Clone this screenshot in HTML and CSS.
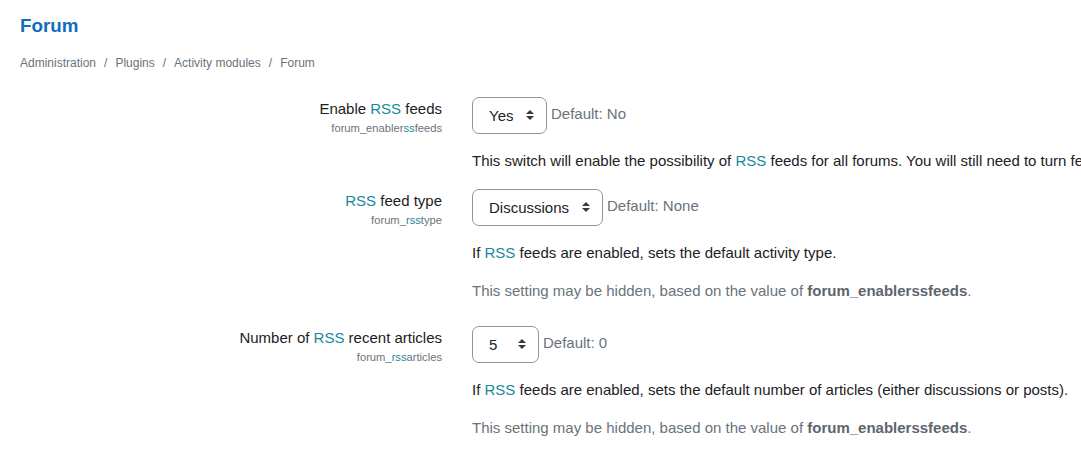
FILE: index.html
```html
<!DOCTYPE html>
<html lang="en">
<head>
<meta charset="utf-8">
<title>Forum</title>
<link rel="stylesheet" href="styles.css">
</head>
<body>
<div class="page">
  <h2 class="title">Forum</h2>
  <nav class="crumbs">
    <span>Administration</span><span class="sep">/</span><span>Plugins</span><span class="sep">/</span><span>Activity modules</span><span class="sep">/</span><span>Forum</span>
  </nav>

  <div class="setting first">
    <div class="label">
      <div class="name">Enable <span class="hl">RSS</span> feeds</div>
      <div class="key">forum_enabler<span class="hl">ss</span>feeds</div>
    </div>
    <div class="field">
      <div class="control">
        <span class="sel"><select><option>Yes</option><option>No</option></select></span>
        <span class="default">Default: No</span>
      </div>
      <p class="desc">This switch will enable the possibility of <span class="hl">RSS</span> feeds for all forums. You will still need to turn feeds on manually in the settings for each forum.</p>
    </div>
  </div>

  <div class="setting">
    <div class="label">
      <div class="name"><span class="hl">RSS</span> feed type</div>
      <div class="key">forum_<span class="hl">rss</span>type</div>
    </div>
    <div class="field">
      <div class="control">
        <span class="sel"><select><option>Discussions</option><option>None</option><option>Posts</option></select></span>
        <span class="default">Default: None</span>
      </div>
      <p class="desc">If <span class="hl">RSS</span> feeds are enabled, sets the default activity type.</p>
      <p class="note">This setting may be hidden, based on the value of <strong>forum_enablerssfeeds</strong>.</p>
    </div>
  </div>

  <div class="setting">
    <div class="label">
      <div class="name">Number of <span class="hl">RSS</span> recent articles</div>
      <div class="key">forum_<span class="hl">rss</span>articles</div>
    </div>
    <div class="field">
      <div class="control">
        <span class="sel"><select><option>5</option><option>0</option><option>1</option><option>10</option><option>15</option><option>20</option></select></span>
        <span class="default">Default: 0</span>
      </div>
      <p class="desc">If <span class="hl">RSS</span> feeds are enabled, sets the default number of articles (either discussions or posts).</p>
      <p class="note">This setting may be hidden, based on the value of <strong>forum_enablerssfeeds</strong>.</p>
    </div>
  </div>
</div>
</body>
</html>
```

FILE: styles.css
```css
html, body {
  margin: 0;
  padding: 0;
  overflow: hidden;
  background: #ffffff;
}
body {
  font-family: "Liberation Sans", Arial, sans-serif;
  font-size: 15px;
  line-height: 1.5;
  color: #1d2125;
}
.page {
  padding: 15px 0 0 20px;
}
.title {
  margin: 0;
  font-size: 18.75px;
  line-height: 22px;
  font-weight: bold;
  color: #0f6cbf;
}
.crumbs {
  margin-top: 17px;
  font-size: 12px;
  line-height: 18px;
  color: #6a737b;
  display: flex;
}
.crumbs .sep {
  padding: 0 8px;
}
.hl {
  color: #17899c;
}
.setting {
  display: grid;
  grid-template-columns: 422px 1fr;
  column-gap: 30px;
  margin-top: 16px;
}
.setting.first {
  margin-top: 24px;
}
.label {
  text-align: right;
  padding-top: 1px;
}
.name {
  line-height: 23px;
}
.key {
  font-size: 11.2px;
  line-height: 16px;
  color: #6a737b;
}
.field {
  min-width: 0;
}
.desc,
.note {
  white-space: nowrap;
}
.control {
  display: flex;
  align-items: flex-start;
  gap: 4px;
  margin-top: 1px;
}
.sel {
  position: relative;
  display: inline-block;
}
.sel select {
  appearance: none;
  -webkit-appearance: none;
  font-family: "Liberation Sans", Arial, sans-serif;
  font-size: 15px;
  line-height: 22px;
  color: #1d2125;
  background: #ffffff;
  border: 1px solid #8f959e;
  border-radius: 7px;
  padding: 7px 32px 6px 16px;
  height: 37px;
  margin: 0;
}
.sel::before,
.sel::after {
  content: "";
  position: absolute;
  right: 13px;
  width: 0;
  height: 0;
  border-left: 4px solid transparent;
  border-right: 4px solid transparent;
  pointer-events: none;
}
.sel::before {
  top: 13px;
  border-bottom: 4px solid #343a40;
}
.sel::after {
  top: 19px;
  border-top: 4px solid #343a40;
}
.default {
  color: #6a737b;
  line-height: 22px;
  padding-top: 6px;
}
.desc {
  margin: 16px 0 0 0;
  line-height: 22px;
}
.note {
  margin: 16px 0 7px 0;
  line-height: 22px;
  color: #6a737b;
}
.note strong {
  font-weight: bold;
  color: #5d656d;
}
```
